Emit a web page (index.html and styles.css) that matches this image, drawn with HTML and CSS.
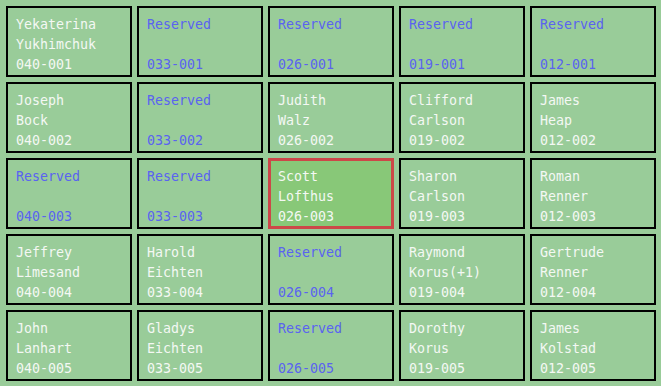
FILE: index.html
```html
<!DOCTYPE html>
<html>
<head>
<meta charset="utf-8">
<link rel="stylesheet" href="styles.css">
</head>
<body>
<div class="grid">
  <div class="cell"><span>Yekaterina</span><span>Yukhimchuk</span><span>040-001</span></div>
  <div class="cell reserved"><span>Reserved</span><span>&nbsp;</span><span>033-001</span></div>
  <div class="cell reserved"><span>Reserved</span><span>&nbsp;</span><span>026-001</span></div>
  <div class="cell reserved"><span>Reserved</span><span>&nbsp;</span><span>019-001</span></div>
  <div class="cell reserved"><span>Reserved</span><span>&nbsp;</span><span>012-001</span></div>

  <div class="cell"><span>Joseph</span><span>Bock</span><span>040-002</span></div>
  <div class="cell reserved"><span>Reserved</span><span>&nbsp;</span><span>033-002</span></div>
  <div class="cell"><span>Judith</span><span>Walz</span><span>026-002</span></div>
  <div class="cell"><span>Clifford</span><span>Carlson</span><span>019-002</span></div>
  <div class="cell"><span>James</span><span>Heap</span><span>012-002</span></div>

  <div class="cell reserved"><span>Reserved</span><span>&nbsp;</span><span>040-003</span></div>
  <div class="cell reserved"><span>Reserved</span><span>&nbsp;</span><span>033-003</span></div>
  <div class="cell selected"><span>Scott</span><span>Lofthus</span><span>026-003</span></div>
  <div class="cell"><span>Sharon</span><span>Carlson</span><span>019-003</span></div>
  <div class="cell"><span>Roman</span><span>Renner</span><span>012-003</span></div>

  <div class="cell"><span>Jeffrey</span><span>Limesand</span><span>040-004</span></div>
  <div class="cell"><span>Harold</span><span>Eichten</span><span>033-004</span></div>
  <div class="cell reserved"><span>Reserved</span><span>&nbsp;</span><span>026-004</span></div>
  <div class="cell"><span>Raymond</span><span>Korus(+1)</span><span>019-004</span></div>
  <div class="cell"><span>Gertrude</span><span>Renner</span><span>012-004</span></div>

  <div class="cell"><span>John</span><span>Lanhart</span><span>040-005</span></div>
  <div class="cell"><span>Gladys</span><span>Eichten</span><span>033-005</span></div>
  <div class="cell reserved"><span>Reserved</span><span>&nbsp;</span><span>026-005</span></div>
  <div class="cell"><span>Dorothy</span><span>Korus</span><span>019-005</span></div>
  <div class="cell"><span>James</span><span>Kolstad</span><span>012-005</span></div>
</div>
</body>
</html>
```
FILE: styles.css
```css
html, body {
  margin: 0;
  padding: 0;
  background: #99cc99;
}
body {
  width: 661px;
  height: 386px;
  overflow: hidden;
  font-family: "DejaVu Sans Mono", "Liberation Mono", monospace;
  font-size: 13.3px;
  color: #f4f8f4;
}
.grid {
  display: grid;
  grid-template-columns: repeat(5, 126px);
  grid-template-rows: repeat(5, 71px);
  gap: 5px;
  padding: 6px 5px 5px 6px;
}
.cell {
  box-sizing: border-box;
  border: 2px solid #000;
  padding: 7px 8px 0 8px;
  display: flex;
  flex-direction: column;
  line-height: 20px;
  white-space: pre;
}
.reserved {
  color: #5a63f0;
}
.selected {
  border: 3px solid #cc4848;
  background: #88c878;
  padding: 6px 7px 0 7px;
}
```
